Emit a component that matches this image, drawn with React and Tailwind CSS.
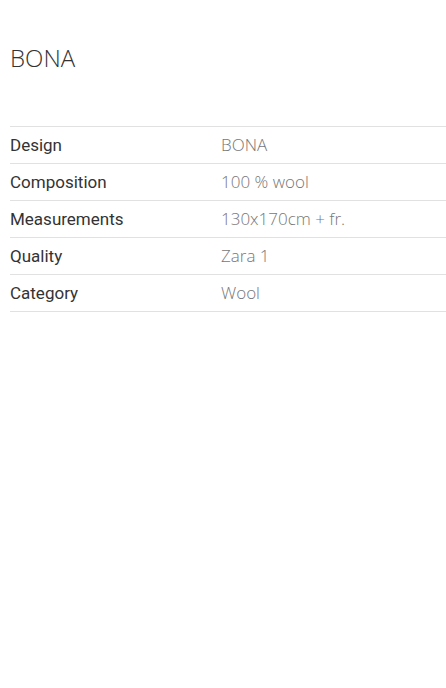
const rows = [
  ["Design", "BONA"],
  ["Composition", "100 % wool"],
  ["Measurements", "130x170cm + fr."],
  ["Quality", "Zara 1"],
  ["Category", "Wool"],
];

export default function App() {
  return (
    <div className="min-h-[688px] bg-white pl-[10px]">
      <h1 className="pt-[42px] text-[24px] leading-[32px] font-light text-[#333] font-['Open_Sans',sans-serif]">
        BONA
      </h1>
      <div className="mt-[52px] border-t border-[#e1e1e1]">
        {rows.map(([label, value]) => (
          <div
            key={label}
            className="grid grid-cols-[211px_1fr] h-[37px] items-center border-b border-[#e1e1e1]"
          >
            <span className="text-[17px] leading-[24px] text-[#333] font-['Roboto',sans-serif]">{label}</span>
            <span className="text-[17px] leading-[24px] font-light text-[#777] font-['Open_Sans',sans-serif]">{value}</span>
          </div>
        ))}
      </div>
    </div>
  );
}
